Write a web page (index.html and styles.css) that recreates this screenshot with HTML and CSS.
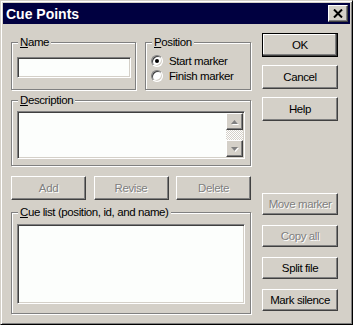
FILE: index.html
```html
<!DOCTYPE html>
<html lang="en">
<head>
    <meta charset="UTF-8">
    <title>Cue Points</title>
    <link rel="stylesheet" href="styles.css">
</head>
<body>
    <div class="window">
        <div class="titlebar">
            <span class="title">Cue Points</span>
            <button class="close-btn">
                <svg width="10" height="9" viewBox="0 0 10 9">
                    <path d="M1 0.5 L9 8.5 M9 0.5 L1 8.5" stroke="#000" stroke-width="2" fill="none"/>
                </svg>
            </button>
        </div>

        <div class="content">
            <div class="left">
                <div class="row-top">
                    <div class="group group-name">
                        <span class="group-label"><u>N</u>ame</span>
                        <input class="field name-input" type="text">
                    </div>
                    <div class="group group-position">
                        <span class="group-label"><u>P</u>osition</span>
                        <label class="radio-row"><span class="radio checked"></span>Start marker</label>
                        <label class="radio-row"><span class="radio"></span>Finish marker</label>
                    </div>
                </div>

                <div class="group group-desc">
                    <span class="group-label"><u>D</u>escription</span>
                    <div class="field textbox">
                        <div class="scrollbar">
                            <span class="sb-btn">
                                <svg width="9" height="6" viewBox="0 0 9 6">
                                    <polygon points="4.5,1 8,5 1,5" fill="#fff" transform="translate(1,1)"/>
                                    <polygon points="4.5,1 8,5 1,5" fill="#808080"/>
                                </svg>
                            </span>
                            <span class="sb-track"></span>
                            <span class="sb-btn">
                                <svg width="9" height="6" viewBox="0 0 9 6">
                                    <polygon points="1,1 8,1 4.5,5" fill="#fff" transform="translate(1,1)"/>
                                    <polygon points="1,1 8,1 4.5,5" fill="#808080"/>
                                </svg>
                            </span>
                        </div>
                    </div>
                </div>

                <div class="btn-row">
                    <button class="btn" disabled>Add</button>
                    <button class="btn" disabled>Revise</button>
                    <button class="btn" disabled>Delete</button>
                </div>

                <div class="group group-cue">
                    <span class="group-label"><u>C</u>ue list (position, id, and name)</span>
                    <div class="field listbox"></div>
                </div>
            </div>

            <div class="right">
                <button class="btn btn-tall default">OK</button>
                <button class="btn btn-tall">Cancel</button>
                <button class="btn btn-tall">Help</button>

                <div class="lower-buttons">
                    <button class="btn" disabled>Move marker</button>
                    <button class="btn" disabled>Copy all</button>
                    <button class="btn">Split file</button>
                    <button class="btn">Mark silence</button>
                </div>
            </div>
        </div>
    </div>
</body>
</html>
```

FILE: styles.css
```css
body {
    margin: 0;
    background: #d4d0c8;
    font-family: "Liberation Sans", Arial, sans-serif;
    font-size: 11.5px;
    letter-spacing: -0.4px;
    color: #000;
}

.window {
    width: 353px;
    height: 325px;
    box-sizing: border-box;
    background: #d4d0c8;
    border: 1px solid;
    border-color: #d4d0c8 #000 #000 #d4d0c8;
    box-shadow: inset 1px 1px #fff, inset -1px -1px #808080;
    padding: 2px;
    display: flex;
    flex-direction: column;
}

/* Title bar */
.titlebar {
    height: 21px;
    background: #000040;
    display: flex;
    align-items: center;
    justify-content: space-between;
}

.title {
    color: #fff;
    font-weight: bold;
    font-size: 14px;
    letter-spacing: 0;
    padding-left: 3px;
}

.close-btn {
    width: 20px;
    height: 17px;
    margin-right: 2px;
    padding: 0;
    background: #d4d0c8;
    border: 1px solid;
    border-color: #fff #404040 #404040 #fff;
    box-shadow: inset -1px -1px #808080;
    display: flex;
    align-items: center;
    justify-content: center;
}

/* Body */
.content {
    flex: 1;
    display: flex;
    padding-left: 8px;
}

.left {
    width: 240px;
    display: flex;
    flex-direction: column;
}

.right {
    width: 76px;
    margin-left: 11px;
    display: flex;
    flex-direction: column;
}

/* Group boxes */
.group {
    position: relative;
    box-sizing: border-box;
    border: 1px solid #808080;
    box-shadow: inset 1px 1px #fff, 1px 1px #fff;
}

.group-label {
    position: absolute;
    top: -8px;
    left: 6px;
    padding: 0 2px;
    line-height: 14px;
    background: #d4d0c8;
    white-space: nowrap;
}

.row-top {
    display: flex;
    justify-content: space-between;
    margin-top: 18px;
}

.group-name {
    width: 125px;
    height: 48px;
    padding: 14px 0 0 5px;
}

.group-position {
    width: 106px;
    height: 48px;
    padding: 10px 0 0 5px;
}

.group-desc {
    margin-top: 10px;
    padding: 10px 5px 6px 5px;
}

.group-cue {
    margin-top: 12px;
    padding: 11px 5px 9px 5px;
}

/* Sunken fields */
.field {
    box-sizing: border-box;
    display: block;
    margin: 0;
    padding: 0;
    background: #fcfefc;
    border: 1px solid;
    border-color: #808080 #fff #fff #808080;
    box-shadow: inset 1px 1px #404040, inset -1px -1px #d4d0c8;
    outline: none;
}

.name-input {
    width: 114px;
    height: 21px;
}

.textbox {
    height: 48px;
    padding: 1px;
    display: flex;
    justify-content: flex-end;
}

.listbox {
    height: 80px;
}

/* Scroll bar */
.scrollbar {
    width: 17px;
    display: flex;
    flex-direction: column;
}

.sb-btn {
    box-sizing: border-box;
    height: 17px;
    background: #d4d0c8;
    border: 1px solid;
    border-color: #fff #404040 #404040 #fff;
    box-shadow: inset -1px -1px #808080;
    display: flex;
    align-items: center;
    justify-content: center;
}

.sb-track {
    flex: 1;
    background: repeating-conic-gradient(#fff 0 25%, #d4d0c8 0 50%) 0 0 / 2px 2px;
}

/* Radio buttons */
.radio-row {
    display: flex;
    align-items: center;
    height: 15px;
}

.radio {
    position: relative;
    box-sizing: border-box;
    width: 12px;
    height: 12px;
    margin-right: 6px;
    border-radius: 50%;
    background: #fff;
    border: 1px solid;
    border-color: #808080 #fff #fff #808080;
    box-shadow: inset 1px 1px #404040, inset -1px -1px #d4d0c8;
}

.radio.checked::after {
    content: "";
    position: absolute;
    left: 3px;
    top: 3px;
    width: 4px;
    height: 4px;
    border-radius: 50%;
    background: #000;
}

/* Push buttons */
.btn {
    box-sizing: border-box;
    width: 75px;
    height: 24px;
    padding: 0;
    font-family: inherit;
    font-size: inherit;
    letter-spacing: inherit;
    color: #000;
    background: #d4d0c8;
    border: 1px solid;
    border-color: #fff #404040 #404040 #fff;
    box-shadow: inset -1px -1px #808080;
}

.btn:disabled {
    color: #808080;
    text-shadow: 1px 1px #fff;
}

.btn-row {
    display: flex;
    justify-content: space-between;
    margin-top: 10px;
}

.right .btn {
    width: 76px;
}

.btn-tall {
    margin-top: 8px;
}

.btn-tall:first-child {
    margin-top: 9px;
}

.btn.default {
    border: 1px solid #000;
    box-shadow: inset -1px -1px #404040, inset -2px -2px #808080, inset 1px 1px #fff;
}

.lower-buttons {
    margin-top: 72px;
    display: flex;
    flex-direction: column;
    gap: 10px;
}

.lower-buttons .btn {
    height: 22px;
}
```
